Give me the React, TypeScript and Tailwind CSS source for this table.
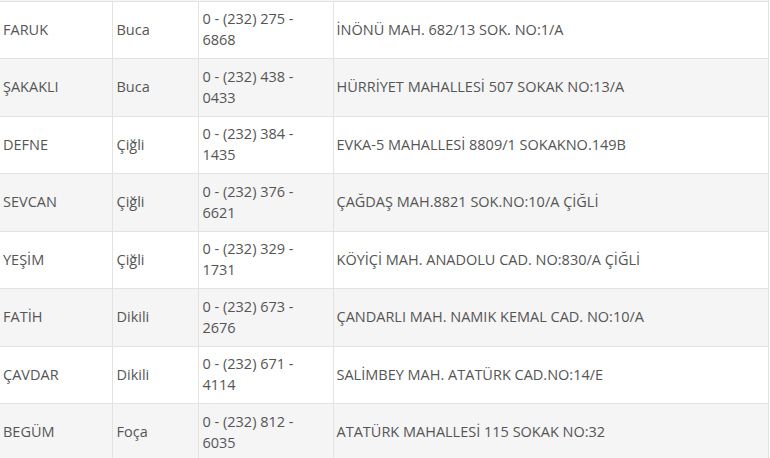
const rows = [
  { name: 'FARUK', district: 'Buca', phone: '0 - (232) 275 - 6868', address: 'İNÖNÜ MAH. 682/13 SOK. NO:1/A' },
  { name: 'ŞAKAKLI', district: 'Buca', phone: '0 - (232) 438 - 0433', address: 'HÜRRİYET MAHALLESİ 507 SOKAK NO:13/A' },
  { name: 'DEFNE', district: 'Çiğli', phone: '0 - (232) 384 - 1435', address: 'EVKA-5 MAHALLESİ 8809/1 SOKAKNO.149B' },
  { name: 'SEVCAN', district: 'Çiğli', phone: '0 - (232) 376 - 6621', address: 'ÇAĞDAŞ MAH.8821 SOK.NO:10/A ÇİĞLİ' },
  { name: 'YEŞİM', district: 'Çiğli', phone: '0 - (232) 329 - 1731', address: 'KÖYİÇİ MAH. ANADOLU CAD. NO:830/A ÇİĞLİ' },
  { name: 'FATİH', district: 'Dikili', phone: '0 - (232) 673 - 2676', address: 'ÇANDARLI MAH. NAMIK KEMAL CAD. NO:10/A' },
  { name: 'ÇAVDAR', district: 'Dikili', phone: '0 - (232) 671 - 4114', address: 'SALİMBEY MAH. ATATÜRK CAD.NO:14/E' },
  { name: 'BEGÜM', district: 'Foça', phone: '0 - (232) 812 - 6035', address: 'ATATÜRK MAHALLESİ 115 SOKAK NO:32' },
];

export default function App() {
  return (
    <div className="w-[770px] h-[458px] overflow-hidden bg-white text-[14.5px] leading-[21px] text-[#555]" style={{ fontFamily: '"Open Sans", sans-serif' }}>
      {/* strip left from the previous row */}
      <div className="h-px w-[769px] bg-[#f5f5f5] border-r border-[#e3e3e3]" />
      <table className="w-[769px] table-fixed border-collapse">
        <colgroup>
          <col className="w-[112px]" />
          <col className="w-[86px]" />
          <col className="w-[135px]" />
          <col />
        </colgroup>
        <tbody>
          {rows.map((r, i) => (
            <tr key={r.name} className={`${i % 2 === 0 ? 'bg-white h-[57px]' : 'bg-[#f5f5f5] h-[58px]'} border-t border-[#e3e3e3]`}>
              <td className="pl-[3px] pr-2 pb-[2px] align-middle">{r.name}</td>
              <td className="pl-[4px] pr-2 pb-[2px] align-middle border-l border-[#e3e3e3]">{r.district}</td>
              <td className="pl-[4px] pr-[6px] pb-[2px] align-middle border-l border-[#e3e3e3]">{r.phone}</td>
              <td className="pl-[3px] pr-2 pb-[2px] align-middle border-l border-r border-[#e3e3e3]">{r.address}</td>
            </tr>
          ))}
        </tbody>
      </table>
    </div>
  );
}
